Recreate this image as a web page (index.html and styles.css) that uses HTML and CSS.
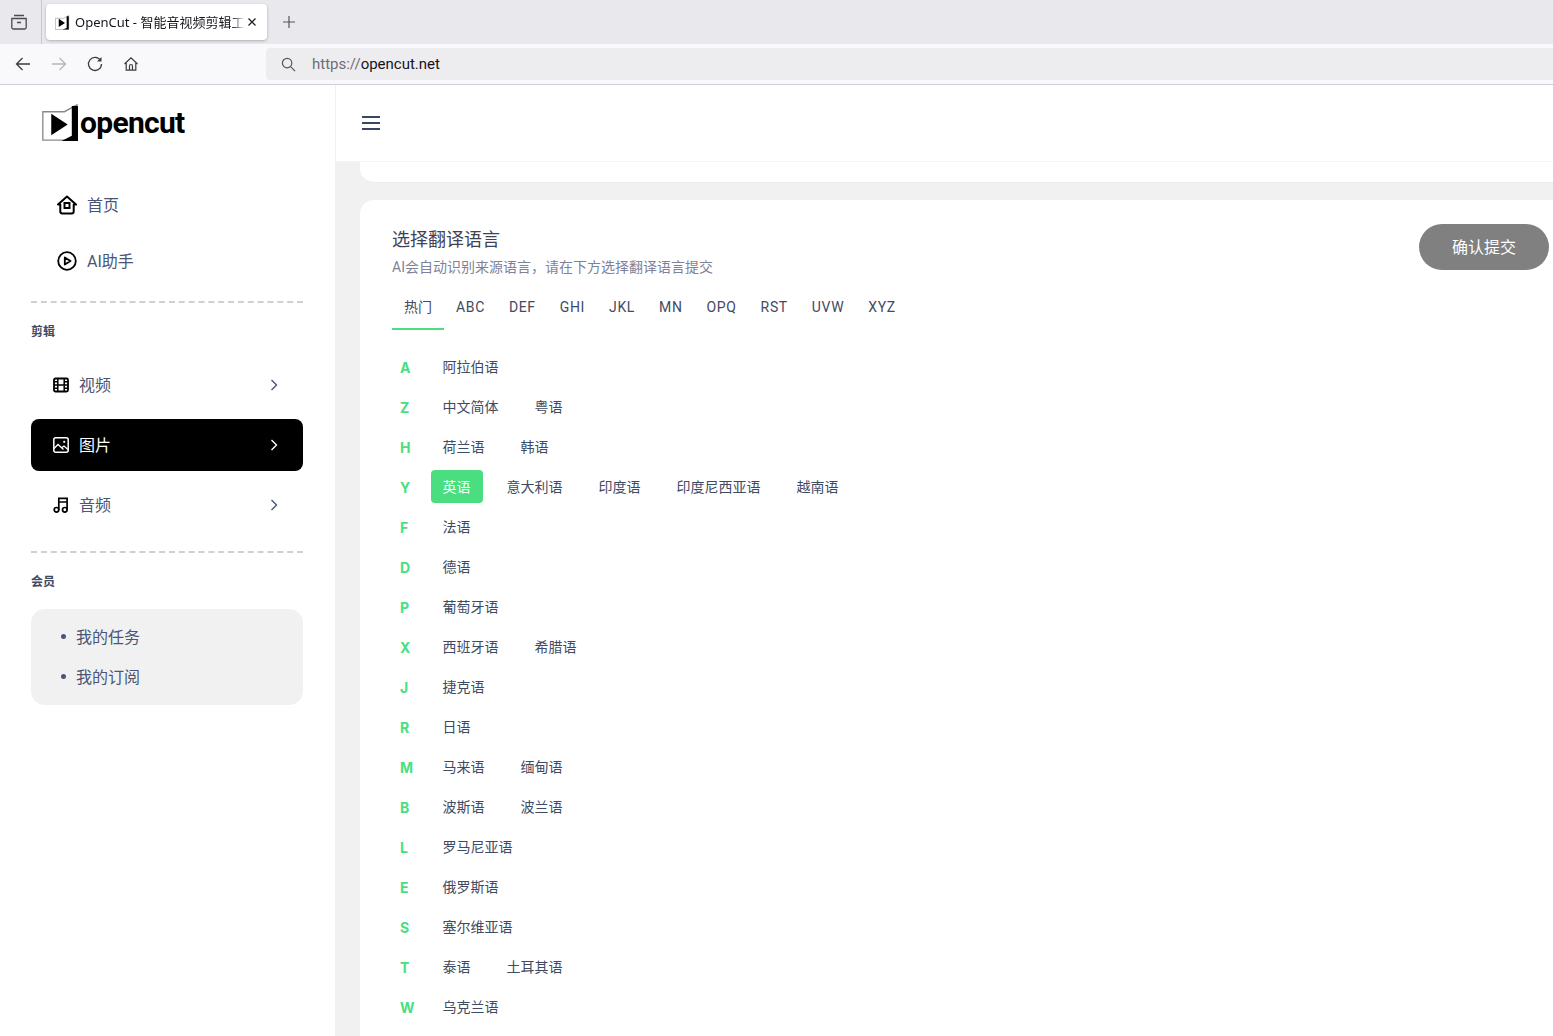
FILE: index.html
```html
<!DOCTYPE html>
<html lang="zh-CN">
<head>
  <meta charset="UTF-8" />
  <title>OpenCut - 智能音视频剪辑工具</title>
  <link rel="stylesheet" href="styles.css">
</head>
<body>
  <!-- browser chrome -->
  <div class="tab-strip">
    <div class="tab-tools">
      <svg class="chrome-icon" viewBox="0 0 18 18"><path d="M4 2.500h10M1.800 5.500h14.400v9a1.500 1.500 0 0 1-1.500 1.500H3.300a1.500 1.500 0 0 1-1.500-1.500zM7 9.500h4" fill="none" stroke="#4a4a50" stroke-width="1.300"/></svg>
    </div>
    <div class="tab">
      <svg class="favicon" viewBox="0 0 36 36"><path d="M1 8h20L33 1v34H1z" fill="#fff" stroke="#999" stroke-width="1.500"/><path d="M9 9l15 10-15 10z" fill="#000"/><path d="M28 3h5v32H18l10-4z" fill="#000"/></svg>
      <span class="tab-title">OpenCut - 智能音视频剪辑工具</span>
      <svg class="tab-close" viewBox="0 0 10 10"><path d="M1.500 1.500l7 7M8.500 1.500l-7 7" stroke="#222" stroke-width="1.300"/></svg>
    </div>
    <svg class="tab-new" viewBox="0 0 14 14"><path d="M7 1v12M1 7h12" stroke="#55555a" stroke-width="1.200"/></svg>
  </div>
  <div class="toolbar">
    <svg class="nav-icon" viewBox="0 0 16 16"><path d="M15 8H1.500M7.500 2L1.500 8l6 6" fill="none" stroke="#3c3c42" stroke-width="1.300"/></svg>
    <svg class="nav-icon" viewBox="0 0 16 16"><path d="M1 8h13.500M8.500 2l6 6-6 6" fill="none" stroke="#b4b4ba" stroke-width="1.300"/></svg>
    <svg class="nav-icon" viewBox="0 0 16 16"><path d="M13.500 4.500A6.500 6.500 0 1 0 14.500 8" fill="none" stroke="#3c3c42" stroke-width="1.300"/><path d="M14.500 1v4.500H10z" fill="#3c3c42"/></svg>
    <svg class="nav-icon" viewBox="0 0 16 16"><path d="M1.500 8L8 1.800 14.500 8M3.200 7v7.200h9.600V7M6.500 14.200V10a1.500 1.500 0 0 1 3 0v4.200" fill="none" stroke="#3c3c42" stroke-width="1.200"/></svg>
    <div class="url-bar">
      <svg class="url-search" viewBox="0 0 16 16"><circle cx="6.500" cy="6.500" r="5" fill="none" stroke="#55555a" stroke-width="1.300"/><path d="M10.200 10.200L15 15" stroke="#55555a" stroke-width="1.300"/></svg>
      <span class="url-text"><span class="url-scheme">https://</span>opencut.net</span>
    </div>
  </div>

  <div class="page">
    <aside class="sidebar">
      <div class="logo">
        <svg class="logo-mark" viewBox="0 0 36 36"><path d="M.8 7.500h21L34 .8v34.400H.8z" fill="#fff" stroke="#8a8a8a" stroke-width="1.300"/><path d="M9 9.500l16 10.500-16 10.500z" fill="#000"/><path d="M29 2h6v34H19l10-5z" fill="#000"/></svg>
        <span class="logo-text">opencut</span>
      </div>

      <a class="nav-top">
        <svg class="icon-20" viewBox="0 0 20 20"><path d="M1 9.500L10 1.500l9 8h-2.300v7a2 2 0 0 1-2 2H5.300a2 2 0 0 1-2-2v-7z" fill="none" stroke="#000" stroke-width="2" stroke-linejoin="round"/><rect x="7.500" y="8" width="5" height="5" fill="none" stroke="#000" stroke-width="2"/></svg>
        <span>首页</span>
      </a>
      <a class="nav-top">
        <svg class="icon-20" viewBox="0 0 20 20"><circle cx="10" cy="10" r="8.800" fill="none" stroke="#000" stroke-width="1.800"/><path d="M7.800 6.500l5.700 3.500-5.700 3.500z" fill="none" stroke="#000" stroke-width="1.800" stroke-linejoin="round"/></svg>
        <span>AI助手</span>
      </a>

      <div class="divider first"></div>
      <div class="group-label">剪辑</div>
      <a class="nav-row">
        <svg class="icon-16" viewBox="0 0 16 16"><rect x="1" y="1.500" width="14" height="13" rx="1.500" fill="none" stroke="#000" stroke-width="1.800"/><path d="M4.800 1.500v13M11.200 1.500v13M1 8h14M1 4.800h3.800M1 11.200h3.800M11.200 4.800H15M11.200 11.200H15" stroke="#000" stroke-width="1.500"/></svg>
        <span class="nav-label">视频</span>
        <svg class="chevron" viewBox="0 0 8 12"><path d="M1.500 1l5 5-5 5" fill="none" stroke="currentColor" stroke-width="1.400"/></svg>
      </a>
      <a class="nav-row active">
        <svg class="icon-16" viewBox="0 0 16 16"><rect x=".8" y=".8" width="14.400" height="14.400" rx="2" fill="none" stroke="#fff" stroke-width="1.500"/><path d="M1 11.500l4-4 5.500 5M9 10.500l2-1.500 4 3.500" fill="none" stroke="#fff" stroke-width="1.300"/><circle cx="11.200" cy="4.800" r="1.100" fill="#fff"/></svg>
        <span class="nav-label">图片</span>
        <svg class="chevron" viewBox="0 0 8 12"><path d="M1.500 1l5 5-5 5" fill="none" stroke="currentColor" stroke-width="1.400"/></svg>
      </a>
      <a class="nav-row">
        <svg class="icon-16" viewBox="0 0 16 16"><circle cx="3.500" cy="12.800" r="2.300" fill="none" stroke="#000" stroke-width="1.700"/><circle cx="11.800" cy="12.800" r="2.300" fill="none" stroke="#000" stroke-width="1.700"/><path d="M5.800 12.800V1.300h8.300v11.500M5.800 5h8.300" fill="none" stroke="#000" stroke-width="1.700"/></svg>
        <span class="nav-label">音频</span>
        <svg class="chevron" viewBox="0 0 8 12"><path d="M1.500 1l5 5-5 5" fill="none" stroke="currentColor" stroke-width="1.400"/></svg>
      </a>

      <div class="divider second"></div>
      <div class="group-label">会员</div>
      <ul class="member-box">
        <li>我的任务</li>
        <li>我的订阅</li>
      </ul>
    </aside>

    <div class="content">
      <header class="topbar">
        <svg class="hamburger" viewBox="0 0 18 14"><path d="M0 1h18M0 7h18M0 13h18" stroke="#3a4660" stroke-width="1.800"/></svg>
      </header>
      <main class="main">
        <div class="card card-stub"></div>
        <section class="card lang-card">
          <div class="card-head">
            <div>
              <h2 class="card-title">选择翻译语言</h2>
              <p class="card-sub">AI会自动识别来源语言，请在下方选择翻译语言提交</p>
            </div>
            <button class="submit-btn"><span>确认提交</span></button>
          </div>

          <div class="tabs">
            <span class="lang-tab current">热门</span>
            <span class="lang-tab">ABC</span>
            <span class="lang-tab">DEF</span>
            <span class="lang-tab">GHI</span>
            <span class="lang-tab">JKL</span>
            <span class="lang-tab">MN</span>
            <span class="lang-tab">OPQ</span>
            <span class="lang-tab">RST</span>
            <span class="lang-tab">UVW</span>
            <span class="lang-tab">XYZ</span>
          </div>

          <div class="lang-list">
            <div class="lang-row"><b>A</b><span>阿拉伯语</span></div>
            <div class="lang-row"><b>Z</b><span>中文简体</span><span>粤语</span></div>
            <div class="lang-row"><b>H</b><span>荷兰语</span><span>韩语</span></div>
            <div class="lang-row"><b>Y</b><span class="picked">英语</span><span>意大利语</span><span>印度语</span><span>印度尼西亚语</span><span>越南语</span></div>
            <div class="lang-row"><b>F</b><span>法语</span></div>
            <div class="lang-row"><b>D</b><span>德语</span></div>
            <div class="lang-row"><b>P</b><span>葡萄牙语</span></div>
            <div class="lang-row"><b>X</b><span>西班牙语</span><span>希腊语</span></div>
            <div class="lang-row"><b>J</b><span>捷克语</span></div>
            <div class="lang-row"><b>R</b><span>日语</span></div>
            <div class="lang-row"><b>M</b><span>马来语</span><span>缅甸语</span></div>
            <div class="lang-row"><b>B</b><span>波斯语</span><span>波兰语</span></div>
            <div class="lang-row"><b>L</b><span>罗马尼亚语</span></div>
            <div class="lang-row"><b>E</b><span>俄罗斯语</span></div>
            <div class="lang-row"><b>S</b><span>塞尔维亚语</span></div>
            <div class="lang-row"><b>T</b><span>泰语</span><span>土耳其语</span></div>
            <div class="lang-row"><b>W</b><span>乌克兰语</span></div>
          </div>
        </section>
      </main>
    </div>
  </div>
</body>
</html>
```

FILE: styles.css
```css
:root {
  --ink: #4b5675;
  --ink-dark: #3f4a63;
  --green: #4ade80;
  --grey-bg: #f1f1f1;
}
* {
  box-sizing: border-box;
}
html, body {
  height: 100%;
}
body {
  margin: 0;
  overflow: hidden;
  display: flex;
  flex-direction: column;
  font-family: Roboto, "Noto Sans CJK SC", sans-serif;
  color: var(--ink);
  background: #fff;
}

/* browser chrome */
.tab-strip {
  height: 44px;
  flex: none;
  display: flex;
  align-items: center;
  background: #e9e9ed;
}
.tab-tools {
  width: 42px;
  height: 44px;
  display: flex;
  align-items: center;
  padding-left: 10px;
  border-right: 1px solid #c8c8cc;
}
.chrome-icon {
  width: 18px;
  height: 18px;
}
.tab {
  width: 221px;
  height: 36px;
  margin-left: 4px;
  padding-left: 9px;
  display: flex;
  align-items: center;
  background: #fff;
  border-radius: 4px;
  box-shadow: 0 1px 3px rgba(0, 0, 0, 0.25);
}
.favicon {
  width: 15px;
  height: 15px;
  flex: none;
}
.tab-title {
  width: 170px;
  margin-left: 5px;
  margin-top: -1px;
  overflow: hidden;
  white-space: nowrap;
  font-family: "Noto Sans", "Noto Sans CJK SC", sans-serif;
  font-size: 13px;
  color: #15141a;
  -webkit-mask-image: linear-gradient(to right, #000 92%, transparent);
  mask-image: linear-gradient(to right, #000 92%, transparent);
}
.tab-close {
  width: 10px;
  height: 10px;
  margin-left: 2px;
  flex: none;
}
.tab-new {
  width: 14px;
  height: 14px;
  margin-left: 15px;
}
.toolbar {
  height: 41px;
  flex: none;
  display: flex;
  align-items: center;
  padding-left: 15px;
  background: #f9f9fb;
  border-bottom: 1px solid #cfcfd8;
}
.nav-icon {
  width: 16px;
  height: 16px;
  margin-right: 20px;
}
.url-bar {
  height: 32px;
  flex: 1;
  margin-left: 107px;
  display: flex;
  align-items: center;
  padding-left: 15px;
  background: #ededf0;
  border-radius: 4px 0 0 4px;
}
.url-search {
  width: 15px;
  height: 15px;
}
.url-text {
  margin-left: 16px;
  font-size: 15px;
  color: #15141a;
}
.url-scheme {
  color: #6d6d75;
}

/* page */
.page {
  flex: 1;
  min-height: 0;
  display: flex;
}
.sidebar {
  width: 336px;
  flex: none;
  padding: 0 32px 0 31px;
  background: #fff;
  border-right: 1px solid #f0f0f0;
}
.logo {
  height: 76px;
  display: flex;
  align-items: center;
  padding: 0 0 0 11px;
}
.logo-mark {
  width: 37px;
  height: 37px;
  margin-top: -2px;
  flex: none;
}
.logo-text {
  margin-left: 1px;
  margin-top: -2px;
  font-family: Roboto, sans-serif;
  font-weight: 700;
  font-size: 30px;
  letter-spacing: -0.7px;
  color: #000;
}
.nav-top {
  height: 56px;
  display: flex;
  align-items: center;
  padding-left: 26px;
  font-size: 16px;
}
.nav-top:first-of-type {
  margin-top: 16px;
}
.nav-top span {
  padding-bottom: 2px;
}
.icon-20 {
  width: 20px;
  height: 20px;
  margin-right: 10px;
}
.divider {
  height: 0;
  border-top: 2px dashed #d0d0d0;
}
.divider.first {
  margin-top: 12px;
}
.divider.second {
  margin-top: 20px;
}
.group-label {
  margin-top: 21px;
  font-size: 12px;
  line-height: 16px;
  font-weight: 700;
  color: var(--ink-dark);
}
.nav-row {
  height: 52px;
  margin-top: 8px;
  display: flex;
  align-items: center;
  padding: 0 25px 0 22px;
  border-radius: 8px;
  font-size: 16px;
}
.group-label + .nav-row {
  margin-top: 19px;
}
.nav-row.active {
  background: #000;
  color: #fff;
}
.icon-16 {
  width: 16px;
  height: 16px;
  flex: none;
}
.nav-label {
  margin-left: 10px;
  padding-bottom: 2px;
  flex: 1;
}
.chevron {
  width: 8px;
  height: 12px;
}
.member-box {
  margin: 19px 0 0;
  padding: 8px 0 8px 30px;
  list-style: none;
  background: var(--grey-bg);
  border-radius: 14px;
  font-size: 16px;
}
.member-box li {
  height: 40px;
  padding-bottom: 2px;
  display: flex;
  align-items: center;
  gap: 10px;
}
.member-box li::before {
  content: '';
  width: 5px;
  height: 5px;
  border-radius: 50%;
  background: var(--ink);
}

/* main area */
.content {
  flex: 1;
  min-width: 0;
  display: flex;
  flex-direction: column;
}
.topbar {
  height: 77px;
  flex: none;
  display: flex;
  align-items: center;
  padding: 0 0 1px 26px;
  background: #fff;
  border-bottom: 1px solid #f3f3f3;
}
.hamburger {
  width: 18px;
  height: 14px;
}
.main {
  flex: 1;
  min-height: 0;
  padding-left: 24px;
  overflow: hidden;
  background: var(--grey-bg);
}
.card {
  background: #fff;
}
.card-stub {
  height: 21px;
  border-radius: 0 0 0 14px;
  border-bottom: 1px solid #ececec;
}
.lang-card {
  margin-top: 17px;
  padding: 24px 4px 40px 32px;
  border-radius: 14px 0 0 0;
}
.card-head {
  display: flex;
  justify-content: space-between;
  align-items: flex-start;
}
.card-title {
  margin: 5px 0 0;
  font-size: 18px;
  line-height: 22px;
  font-weight: 400;
  color: #3f4254;
}
.card-sub {
  margin: 7px 0 0;
  font-size: 14px;
  line-height: 18px;
  color: #7e8299;
}
.submit-btn {
  width: 130px;
  height: 46px;
  padding: 0 0 2px;
  border: none;
  border-radius: 23px;
  background: #808080;
  color: #fff;
  font-family: inherit;
  font-size: 16px;
}
.tabs {
  display: flex;
  margin-top: 8px;
}
.lang-tab {
  padding: 0 12px;
  height: 46px;
  line-height: 46px;
  font-size: 14px;
  letter-spacing: 0.65px;
  color: var(--ink-dark);
  border-bottom: 2px solid transparent;
}
.lang-tab.current {
  letter-spacing: 0;
  border-bottom-color: var(--green);
}
.lang-list {
  margin-top: 17px;
}
.lang-row {
  height: 40px;
  display: flex;
  align-items: center;
  gap: 12px;
  font-size: 14px;
  color: var(--ink-dark);
}
.lang-row b {
  width: 27px;
  padding-left: 8px;
  color: var(--green);
  font-family: Inter, sans-serif;
  font-size: 14px;
}
.lang-row span {
  height: 33px;
  line-height: 34px;
  margin-bottom: 1px;
  padding: 0 12.5px 0 11.5px;
  border-radius: 4px;
}
.lang-row .picked {
  background: var(--green);
  color: #fff;
}
```
